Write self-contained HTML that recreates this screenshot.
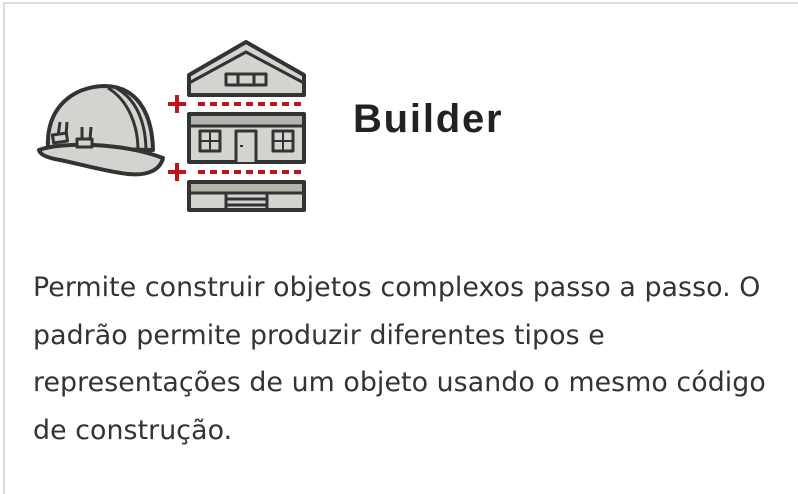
<!DOCTYPE html>
<html><head><meta charset="utf-8"><style>
html,body{margin:0;padding:0;background:#fff;}
body{width:798px;height:481px;overflow:hidden;position:relative;font-family:"Liberation Sans",sans-serif;}
.card{position:absolute;left:3px;top:2px;width:800px;height:490px;border-left:2px solid #ddd;border-top:2px solid #ddd;}
h1{position:absolute;left:353px;top:97px;margin:0;font-size:40px;font-weight:bold;color:#222;letter-spacing:1.8px;}
p{position:absolute;left:33px;top:264px;width:780px;margin:0;font-family:"DejaVu Sans",sans-serif;font-size:26.8px;line-height:47.5px;color:#333;white-space:nowrap;letter-spacing:0.07px;}
svg{position:absolute;left:0;top:0;}
</style></head><body>
<div class="card"></div>
<svg width="320" height="220" viewBox="0 0 320 220">
<g stroke="#333" stroke-width="4" stroke-linejoin="round" fill="#d2d4cf">
<path d="M48 148 C46 108 72 87 104 86 C135 86 152 110 153 150 Z"/>
<path d="M39 150 C60 142 120 142 163 158 C160 170 148 176 128 174 C108 172 80 164 60 160 C48 158 40 155 39 150 Z"/>
<path d="M108 88 C128 100 138 125 138 150" fill="none" stroke-width="3"/>
<path d="M116 88 C138 100 146 125 146 152" fill="none" stroke-width="3"/>
<path d="M58 136 L60 122 M66 136 L67 122 M82 140 L82 127 M90 140 L91 127" fill="none" stroke-width="3"/>
<rect x="53" y="134" width="14" height="8" stroke-width="3" transform="rotate(-8 60 138)"/>
<rect x="77" y="139" width="15" height="8" stroke-width="3"/>
<path d="M189 95 L189 75 L246 42 L304 75 L304 95 Z"/>
<path d="M189 83 L246 52 L304 83" fill="none" stroke-width="3"/>
<rect x="226" y="74" width="40" height="11" stroke-width="3"/>
<path d="M238 74 V85 M254 74 V85" stroke-width="3"/>
<rect x="189" y="114" width="115" height="48"/>
<rect x="191" y="116" width="111" height="9" fill="#b2b5ae" stroke="none"/>
<path d="M189 126 H304" stroke-width="3"/>
<rect x="200" y="131" width="20" height="20" stroke-width="3"/>
<path d="M210 131 V151 M200 141 H220" stroke-width="2"/>
<rect x="273" y="131" width="20" height="20" stroke-width="3"/>
<path d="M283 131 V151 M273 141 H293" stroke-width="2"/>
<path d="M236 162 V131 H256 V162" stroke-width="3"/>
<path d="M240 146 H243" stroke-width="2"/>
<rect x="189" y="182" width="115" height="28"/>
<rect x="191" y="184" width="111" height="8" fill="#b2b5ae" stroke="none"/>
<path d="M189 193 H304 M226 193 V210 M267 193 V210 M226 199 H267 M226 205 H267" stroke-width="3"/>
</g>
<g stroke="#c0141b" stroke-width="4" fill="none">
<path d="M168 104 H186 M177 95 V113"/>
<path d="M198 104 H302" stroke-dasharray="7 5"/>
<path d="M168 172 H186 M177 163 V181"/>
<path d="M198 172 H302" stroke-dasharray="7 5"/>
</g>
</svg>
<h1>Builder</h1>
<p>Permite construir objetos complexos passo a passo. O<br>padrão permite produzir diferentes tipos e<br>representações de um objeto usando o mesmo código<br>de construção.</p>
</body></html>
